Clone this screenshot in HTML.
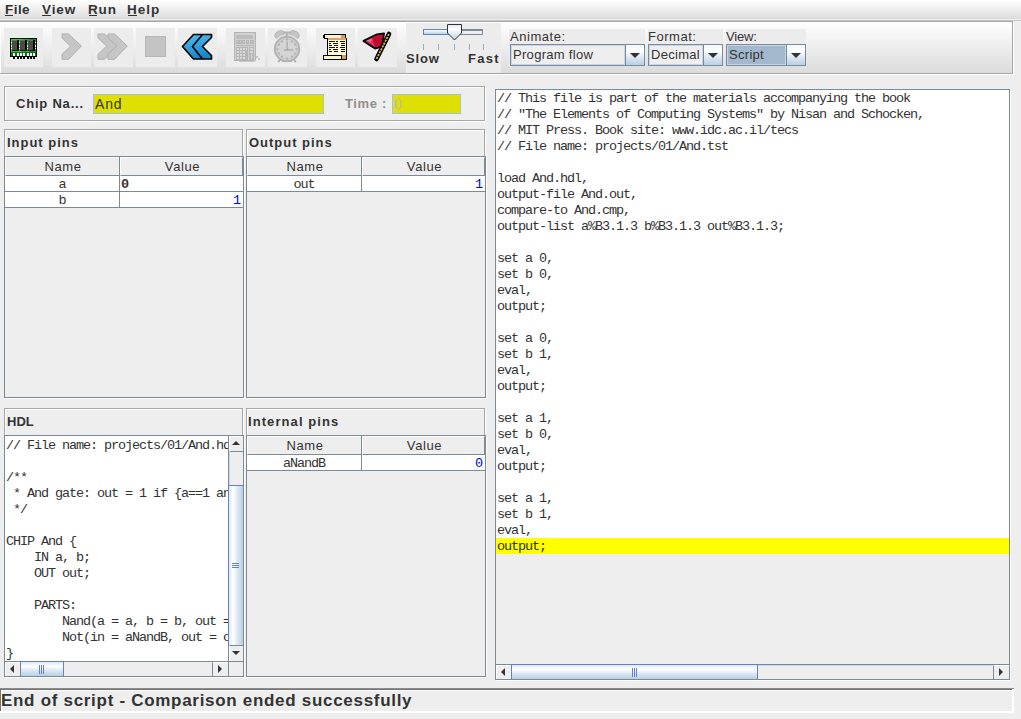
<!DOCTYPE html>
<html><head><meta charset="utf-8">
<style>
*{margin:0;padding:0;box-sizing:border-box}
html,body{width:1021px;height:719px;overflow:hidden;background:#eeeeee;font-family:"Liberation Sans",sans-serif;color:#333333;position:relative}
.a{position:absolute}
.t{position:absolute;white-space:pre;line-height:1}
.b{font-weight:bold}
.m{position:absolute;white-space:pre;font-family:"Liberation Mono",monospace;font-size:13.5px;letter-spacing:-1.1px;line-height:16px;height:16px;color:#333}
.etch{position:absolute;border-top:1px solid #a6a6a6;border-left:1px solid #a6a6a6;border-right:1px solid #fff;border-bottom:1px solid #fff;box-shadow:inset 1px 1px 0 #fff, inset -1px -1px 0 #a6a6a6}
.btn{position:absolute;top:28px;width:39px;height:39px;background:#ececec}
.thumbh{position:absolute;border:1px solid #6382bf;background:linear-gradient(#dde8f3 0%,#ffffff 30%,#dde8f3 60%,#b8cfe5 100%)}
.thumbv{position:absolute;border:1px solid #6382bf;background:linear-gradient(90deg,#dde8f3 0%,#ffffff 30%,#dde8f3 60%,#b8cfe5 100%)}
.sbtn{position:absolute;background:#eeeeee;border-top:1px solid #fff;border-left:1px solid #fff}
svg{position:absolute;overflow:visible}
</style></head><body>
<div class="a" style="left:0;top:0;width:1021px;height:19px;background:linear-gradient(#ffffff,#dcdcdc)"></div>
<div class="a" style="left:0;top:19px;width:1021px;height:1px;background:#eeeeee"></div>
<div class="a" style="left:0;top:20px;width:1021px;height:1px;background:#c6c6c6"></div>
<div class="t b" style="left:5px;top:3px;font-size:13.5px;letter-spacing:0.45px">File</div>
<div class="t b" style="left:42px;top:3px;font-size:13.5px;letter-spacing:0.9px">View</div>
<div class="t b" style="left:88px;top:3px;font-size:13.5px;letter-spacing:0.85px">Run</div>
<div class="t b" style="left:127px;top:3px;font-size:13.5px;letter-spacing:1.0px">Help</div>
<div class="a" style="left:5px;top:15px;width:8px;height:1px;background:#333"></div>
<div class="a" style="left:42px;top:15px;width:9px;height:1px;background:#333"></div>
<div class="a" style="left:89px;top:15px;width:8px;height:1px;background:#333"></div>
<div class="a" style="left:128px;top:15px;width:9px;height:1px;background:#333"></div>
<div class="a" style="left:0;top:21px;width:1014px;height:54px;background:linear-gradient(#ffffff,#dadada)"></div>
<div class="a" style="left:0;top:21px;width:1013px;height:1px;background:#a6a6a6"></div>
<div class="a" style="left:1012px;top:21px;width:1px;height:53px;background:#a6a6a6"></div>
<div class="a" style="left:0;top:73px;width:1013px;height:1px;background:#a6a6a6"></div>
<div class="a" style="left:0;top:22px;width:1012px;height:1px;background:#fff"></div>
<div class="a" style="left:0;top:22px;width:1px;height:51px;background:#fff"></div>
<div class="a" style="left:1013px;top:22px;width:1px;height:53px;background:#fff"></div>
<div class="a" style="left:0;top:74px;width:1014px;height:1px;background:#fff"></div>
<div class="btn" style="left:4px"></div>
<div class="btn" style="left:52px"></div>
<div class="btn" style="left:94px"></div>
<div class="btn" style="left:136px"></div>
<div class="btn" style="left:178px"></div>
<div class="btn" style="left:226px"></div>
<div class="btn" style="left:268px"></div>
<div class="btn" style="left:316px"></div>
<div class="btn" style="left:358px"></div>
<svg style="left:10px;top:37px" width="28" height="22" viewBox="0 0 28 22" shape-rendering="crispEdges">
<rect x="0" y="1" width="27" height="19" fill="#000"/>
<rect x="1" y="2" width="25" height="16" fill="#12b81e"/>
<rect x="1" y="2" width="12" height="16" fill="#22d82a"/>
<rect x="19" y="2" width="7" height="16" fill="#0f8f2a"/>
<rect x="2" y="3" width="7" height="11" fill="#000"/><rect x="2" y="3" width="5" height="10" fill="#4a4a4a"/><rect x="2" y="3" width="5" height="1" fill="#6a6a6a"/>
<rect x="10" y="3" width="7" height="11" fill="#000"/><rect x="10" y="3" width="5" height="10" fill="#4a4a4a"/><rect x="10" y="3" width="5" height="1" fill="#6a6a6a"/>
<rect x="18" y="3" width="7" height="11" fill="#000"/><rect x="18" y="3" width="5" height="10" fill="#4a4a4a"/><rect x="18" y="3" width="5" height="1" fill="#6a6a6a"/>
<g fill="#fff"><rect x="1" y="5" width="1" height="1"/><rect x="1" y="8" width="1" height="2"/><rect x="1" y="11" width="1" height="1"/>
<rect x="9" y="5" width="1" height="1"/><rect x="9" y="8" width="1" height="2"/><rect x="9" y="11" width="1" height="1"/>
<rect x="17" y="5" width="1" height="1"/><rect x="17" y="8" width="1" height="2"/><rect x="17" y="11" width="1" height="1"/>
<rect x="25" y="5" width="1" height="1"/><rect x="25" y="8" width="1" height="2"/><rect x="25" y="11" width="1" height="1"/></g>
<rect x="1" y="15" width="25" height="4" fill="#0a6e1e"/>
<g fill="#ffffff"><rect x="3" y="16" width="2" height="3"/><rect x="7" y="16" width="2" height="3"/><rect x="10" y="16" width="2" height="3"/><rect x="13" y="16" width="2" height="3"/><rect x="17" y="16" width="2" height="3"/><rect x="20" y="16" width="2" height="3"/><rect x="23" y="16" width="2" height="3"/></g>
<g fill="#000"><rect x="2" y="19" width="24" height="1"/><rect x="3" y="20" width="2" height="2"/><rect x="7" y="20" width="2" height="2"/><rect x="10" y="20" width="2" height="2"/><rect x="13" y="20" width="2" height="2"/><rect x="17" y="20" width="2" height="2"/><rect x="20" y="20" width="2" height="2"/><rect x="23" y="20" width="2" height="2"/></g>
</svg>
<svg style="left:62px;top:34px" width="20" height="26"><polygon points="0,0 6.6,0 19.3,12 6.6,25.3 0,25.3 0,20.3 8.7,12 0,4" fill="#c6c6c6" stroke="#b0b0b0" stroke-width="1" stroke-linejoin="miter"/></svg>
<svg style="left:98px;top:34px" width="31" height="26"><polygon points="0,0 6.6,0 19.3,12 6.6,25.3 0,25.3 0,20.3 8.7,12 0,4" fill="#c6c6c6" stroke="#b0b0b0" stroke-width="1" stroke-linejoin="miter"/><polygon points="0,0 6.6,0 19.3,12 6.6,25.3 0,25.3 0,20.3 8.7,12 0,4" transform="translate(10,0)" fill="#c6c6c6" stroke="#b0b0b0" stroke-width="1" stroke-linejoin="miter"/></svg>
<div class="a" style="left:145px;top:36px;width:21px;height:21px;background:#c4c4c4;border:1px solid #b6b6b6"></div>
<svg style="left:182px;top:34px" width="31" height="26" viewBox="0 0 31 26">
<defs><linearGradient id="rg" x1="0" y1="0" x2="0.3" y2="1"><stop offset="0" stop-color="#4fc0f2"/><stop offset="1" stop-color="#1b88c6"/></linearGradient></defs>
<polygon points="0.5,12.5 11.5,0.5 29.5,0.5 29.5,3.5 20.5,12.5 29.5,21.5 29.5,25 11.5,25" fill="url(#rg)" stroke="#000" stroke-width="1.6" stroke-linejoin="miter"/>
<polyline points="20.5,0.5 10.5,12.5 20.5,25" fill="none" stroke="#000" stroke-width="1.6"/>
</svg>
<svg style="left:234px;top:32px" width="28" height="30" viewBox="0 0 28 30" shape-rendering="crispEdges">
<rect x="0" y="0" width="22" height="29" rx="1" fill="#b4b4b4"/>
<rect x="1" y="1" width="20" height="27" fill="#d0d0d0"/>
<rect x="2" y="3" width="17" height="4" fill="#bdbdbd"/>
<g fill="#b6b6b6"><rect x="2" y="8" width="9" height="4"/><rect x="12" y="8" width="3" height="4"/><rect x="16" y="8" width="4" height="4"/>
<rect x="2" y="13" width="18" height="1"/>
<rect x="2" y="15" width="12" height="13"/><rect x="15" y="15" width="5" height="13"/></g>
<g fill="#d8d8d8"><rect x="3" y="16" width="2" height="2"/><rect x="6" y="16" width="2" height="2"/><rect x="9" y="16" width="2" height="2"/><rect x="12" y="16" width="1" height="2"/>
<rect x="3" y="19" width="2" height="2"/><rect x="6" y="19" width="2" height="2"/><rect x="9" y="19" width="2" height="2"/>
<rect x="3" y="22" width="2" height="2"/><rect x="6" y="22" width="2" height="2"/><rect x="9" y="22" width="2" height="2"/>
<rect x="3" y="25" width="2" height="2"/><rect x="6" y="25" width="2" height="2"/><rect x="9" y="25" width="2" height="2"/>
<rect x="16" y="16" width="3" height="2"/><rect x="16" y="19" width="3" height="2"/><rect x="17" y="22" width="1" height="5"/>
<rect x="3" y="9" width="1" height="1"/><rect x="6" y="9" width="1" height="1"/><rect x="9" y="9" width="1" height="1"/><rect x="13" y="9" width="1" height="1"/><rect x="17" y="9" width="1" height="1"/></g>
<g fill="#c8c8c8"><rect x="22" y="24" width="2" height="2"/><rect x="24" y="26" width="2" height="2"/><rect x="20" y="28" width="2" height="1"/><rect x="5" y="29" width="16" height="1"/></g>
</svg>
<svg style="left:272px;top:30px" width="30" height="34" viewBox="0 0 30 34">
<ellipse cx="7.5" cy="4.6" rx="5" ry="3.4" transform="rotate(-30 7.5 4.6)" fill="#c4c4c4" stroke="#b0b0b0" stroke-width="1"/>
<ellipse cx="22.5" cy="4.6" rx="5" ry="3.4" transform="rotate(30 22.5 4.6)" fill="#c4c4c4" stroke="#b0b0b0" stroke-width="1"/>
<circle cx="15" cy="19" r="13.6" fill="none" stroke="#ececec" stroke-width="1.4"/>
<rect x="13.5" y="2" width="3" height="5" fill="#b4b4b4"/><rect x="11" y="1.5" width="8" height="2" fill="#b4b4b4"/>
<line x1="6" y1="32" x2="10" y2="28" stroke="#b4b4b4" stroke-width="2.2"/><line x1="24" y1="32" x2="20" y2="28" stroke="#b4b4b4" stroke-width="2.2"/>
<rect x="10" y="30" width="10" height="2" fill="#b4b4b4"/>
<circle cx="15" cy="19" r="12.2" fill="#d4d4d4" stroke="#b2b2b2" stroke-width="2"/>
<circle cx="15" cy="19" r="10.2" fill="none" stroke="#c6c6c6" stroke-width="1"/>
<g fill="#b4b4b4"><rect x="14" y="8.5" width="2" height="2"/><rect x="14" y="27.5" width="2" height="2"/><rect x="4.5" y="18" width="2" height="2"/><rect x="23.5" y="18" width="2" height="2"/>
<rect x="9" y="10.5" width="2" height="2"/><rect x="19" y="10.5" width="2" height="2"/><rect x="9" y="25.5" width="2" height="2"/><rect x="19" y="25.5" width="2" height="2"/>
<rect x="6" y="13.5" width="2" height="2"/><rect x="22" y="13.5" width="2" height="2"/><rect x="6" y="22.5" width="2" height="2"/><rect x="22" y="22.5" width="2" height="2"/></g>
<rect x="14.5" y="11.5" width="1.3" height="9.5" fill="#aaaaaa"/><rect x="12" y="19.3" width="9" height="1.3" fill="#aaaaaa"/>
</svg>
<svg style="left:323px;top:33px" width="25" height="28" viewBox="0 0 25 28" shape-rendering="crispEdges">
<rect x="1" y="1" width="22" height="5" fill="#000"/>
<rect x="0" y="2" width="2" height="3" fill="#000"/>
<rect x="2" y="2" width="16" height="3" fill="#fff6cc"/>
<rect x="18" y="2" width="4" height="4" fill="#d99a5e"/>
<rect x="4" y="5" width="20" height="18" fill="#000"/>
<rect x="5" y="5" width="18" height="18" fill="#fff8d2"/>
<rect x="5" y="5" width="18" height="2" fill="#dca26a"/>
<g fill="#111"><rect x="6" y="8" width="6" height="1"/><rect x="13" y="8" width="2" height="1"/><rect x="17" y="8" width="5" height="1"/>
<rect x="6" y="10" width="2" height="1"/><rect x="10" y="10" width="5" height="1"/><rect x="18" y="10" width="4" height="1"/>
<rect x="6" y="12" width="3" height="1"/><rect x="11" y="12" width="4" height="1"/><rect x="18" y="12" width="4" height="1"/>
<rect x="6" y="14" width="6" height="1"/><rect x="13" y="14" width="2" height="1"/><rect x="17" y="14" width="5" height="1"/>
<rect x="6" y="16" width="2" height="1"/><rect x="10" y="16" width="5" height="1"/><rect x="18" y="16" width="4" height="1"/>
<rect x="6" y="18" width="3" height="1"/><rect x="11" y="18" width="4" height="1"/><rect x="18" y="18" width="4" height="1"/></g>
<rect x="0" y="22" width="24" height="5" fill="#000"/>
<rect x="1" y="23" width="17" height="3" fill="#fff6cc"/>
<rect x="19" y="22" width="4" height="4" fill="#d99a5e"/>
</svg>
<svg style="left:362px;top:32px" width="31" height="30" viewBox="0 0 31 30">
<polygon points="1.5,9 15,2.5 22,1.5 19.5,14.5 13,16.5" fill="#e8285a" stroke="#000" stroke-width="2" stroke-linejoin="round"/>
<polygon points="10,5 16,3 21,2.5 19,14 13,15" fill="#b8102e"/>
<polygon points="4,9 10,6 9,10" fill="#ff6a8a"/>
<line x1="27" y1="2" x2="14.5" y2="27" stroke="#000" stroke-width="4.6" stroke-linecap="round"/>
<line x1="27" y1="2" x2="14.5" y2="27" stroke="#dcb848" stroke-width="1.8" stroke-dasharray="2.2 1"/>
</svg>
<div class="a" style="left:406px;top:23px;width:95px;height:50px;background:#ececec"></div>
<div class="a" style="left:423px;top:29px;width:26px;height:6px;border:1px solid #6382bf;background:linear-gradient(#ffffff,#b8cfe5)"></div>
<div class="a" style="left:448px;top:29px;width:35px;height:6px;border:1px solid #7a8a99;border-top-width:2px;background:#eeeeee"></div>
<svg style="left:447px;top:24px" width="16" height="17" viewBox="0 0 16 17">
<defs><linearGradient id="tg" x1="0" y1="0" x2="0" y2="1"><stop offset="0" stop-color="#dde8f3"/><stop offset="0.3" stop-color="#ffffff"/><stop offset="1" stop-color="#b8cfe5"/></linearGradient></defs>
<polygon points="0.5,0.5 14.5,0.5 14.5,9 7.5,16 0.5,9" fill="url(#tg)" stroke="#333" stroke-width="1"/>
</svg>
<div class="a" style="left:423px;top:44px;width:1px;height:6px;background:#97abc9"></div>
<div class="a" style="left:438px;top:44px;width:1px;height:6px;background:#97abc9"></div>
<div class="a" style="left:454px;top:44px;width:1px;height:6px;background:#97abc9"></div>
<div class="a" style="left:469px;top:44px;width:1px;height:6px;background:#97abc9"></div>
<div class="a" style="left:483px;top:44px;width:1px;height:6px;background:#97abc9"></div>
<div class="t b" style="left:406px;top:52px;font-size:13px;letter-spacing:0.87px">Slow</div>
<div class="t b" style="left:468px;top:52px;font-size:13px;letter-spacing:1.3px">Fast</div>
<div class="a" style="left:509px;top:29px;width:136px;height:37px;background:#ececec"></div>
<div class="a" style="left:648px;top:29px;width:75px;height:37px;background:#ececec"></div>
<div class="a" style="left:726px;top:29px;width:80px;height:37px;background:#ececec"></div>
<div class="t" style="left:510px;top:30px;font-size:13px;letter-spacing:0.53px">Animate:</div>
<div class="t" style="left:648px;top:30px;font-size:13px;letter-spacing:0.53px">Format:</div>
<div class="t" style="left:726px;top:30px;font-size:13px;letter-spacing:-0.15px">View:</div>
<div class="a" style="left:510px;top:44px;width:135px;height:22px;border:1px solid #7a8a99;background:#eeeeee"></div>
<div class="a" style="left:511px;top:45px;width:114px;height:20px;border:1px solid #c6d6e8;background:#eeeeee"></div>
<div class="a" style="left:625px;top:45px;width:1px;height:20px;background:#7a8a99"></div>
<div class="a" style="left:626px;top:45px;width:18px;height:20px;background:linear-gradient(#f4f8fc 0%,#ffffff 30%,#dde8f3 60%,#b8cfe5 100%)"></div>
<svg style="left:630px;top:53px" width="10" height="5"><polygon points="0,0 10,0 5,5" fill="#333"/></svg>
<div class="t" style="left:513px;top:48px;font-size:13px;letter-spacing:0.3px">Program flow</div>
<div class="a" style="left:648px;top:44px;width:75px;height:22px;border:1px solid #7a8a99;background:#eeeeee"></div>
<div class="a" style="left:649px;top:45px;width:54px;height:20px;border:1px solid #c6d6e8;background:#eeeeee"></div>
<div class="a" style="left:703px;top:45px;width:1px;height:20px;background:#7a8a99"></div>
<div class="a" style="left:704px;top:45px;width:18px;height:20px;background:linear-gradient(#f4f8fc 0%,#ffffff 30%,#dde8f3 60%,#b8cfe5 100%)"></div>
<svg style="left:708px;top:53px" width="10" height="5"><polygon points="0,0 10,0 5,5" fill="#333"/></svg>
<div class="t" style="left:651px;top:48px;font-size:13px;letter-spacing:0.3px">Decimal</div>
<div class="a" style="left:726px;top:44px;width:80px;height:22px;border:1px solid #7a8a99;background:#eeeeee"></div>
<div class="a" style="left:727px;top:45px;width:59px;height:20px;border:1px solid #c6d6e8;background:#a3b8cc"></div>
<div class="a" style="left:786px;top:45px;width:1px;height:20px;background:#7a8a99"></div>
<div class="a" style="left:787px;top:45px;width:18px;height:20px;background:linear-gradient(#f4f8fc 0%,#ffffff 30%,#dde8f3 60%,#b8cfe5 100%)"></div>
<svg style="left:791px;top:53px" width="10" height="5"><polygon points="0,0 10,0 5,5" fill="#333"/></svg>
<div class="t" style="left:729px;top:48px;font-size:13px;letter-spacing:0.3px">Script</div>
<div class="a" style="left:5px;top:87px;width:481px;height:35px;border:1px solid #ffffff"></div>
<div class="a" style="left:4px;top:86px;width:481px;height:35px;border:1px solid #a6a6a6"></div>
<div class="t b" style="left:16px;top:97px;font-size:13px;letter-spacing:0.79px">Chip Na...</div>
<div class="a" style="left:93px;top:94px;width:231px;height:20px;background:#e0e000;border:1px solid #a3c0e0"></div>
<div class="t" style="left:95px;top:97px;font-size:14px;letter-spacing:0.8px">And</div>
<div class="t b" style="left:345px;top:97px;font-size:13px;color:#8e8e8e;letter-spacing:0.64px">Time :</div>
<div class="a" style="left:392px;top:94px;width:69px;height:20px;background:#e0e000;border:1px solid #a3c0e0"></div>
<div class="t" style="left:394px;top:97px;font-size:14px;color:#b8b8b8">0</div>
<div class="a" style="left:5px;top:130px;width:239px;height:269px;border:1px solid #ffffff"></div>
<div class="a" style="left:4px;top:129px;width:239px;height:269px;border:1px solid #a6a6a6"></div>
<div class="a" style="left:247px;top:130px;width:239px;height:269px;border:1px solid #ffffff"></div>
<div class="a" style="left:246px;top:129px;width:239px;height:269px;border:1px solid #a6a6a6"></div>
<div class="a" style="left:5px;top:409px;width:239px;height:269px;border:1px solid #ffffff"></div>
<div class="a" style="left:4px;top:408px;width:239px;height:269px;border:1px solid #a6a6a6"></div>
<div class="a" style="left:247px;top:409px;width:239px;height:269px;border:1px solid #ffffff"></div>
<div class="a" style="left:246px;top:408px;width:239px;height:269px;border:1px solid #a6a6a6"></div>
<div class="t b" style="left:7px;top:136px;font-size:13px;letter-spacing:0.98px">Input pins</div>
<div class="t b" style="left:249px;top:136px;font-size:13px;letter-spacing:0.98px">Output pins</div>
<div class="t b" style="left:7px;top:415px;font-size:13px">HDL</div>
<div class="t b" style="left:248px;top:415px;font-size:13px;letter-spacing:1.08px">Internal pins</div>
<div class="a" style="left:4px;top:156px;width:240px;height:242px;border:1px solid #7a8a99;background:#eeeeee"></div>
<div class="a" style="left:244px;top:157px;width:1px;height:242px;background:#fff"></div><div class="a" style="left:5px;top:398px;width:240px;height:1px;background:#fff"></div>
<div class="a" style="left:5px;top:157px;width:114px;height:19px;border-bottom:1px solid #7a8a99;border-top:1px solid #fff;border-left:1px solid #fff"></div>
<div class="a" style="left:119px;top:157px;width:1px;height:19px;background:#7a8a99"></div>
<div class="a" style="left:120px;top:157px;width:123px;height:19px;border-bottom:1px solid #7a8a99;border-top:1px solid #fff;border-left:1px solid #fff;border-right:1px solid #7a8a99"></div>
<div class="t" style="left:6px;top:160px;width:114px;text-align:center;font-size:13px;letter-spacing:0.6px">Name</div>
<div class="t" style="left:121px;top:160px;width:123px;text-align:center;font-size:13px;letter-spacing:0.6px">Value</div>
<div class="a" style="left:5px;top:176px;width:238px;height:16px;background:#fff;border-bottom:1px solid #7a8a99"></div>
<div class="a" style="left:119px;top:176px;width:1px;height:16px;background:#7a8a99"></div>
<div class="m" style="left:5px;top:177px;width:114px;text-align:center;">a</div>
<div class="m" style="left:121px;top:177px;font-weight:bold;font-size:13.5px;letter-spacing:0">0</div>
<div class="a" style="left:5px;top:192px;width:238px;height:16px;background:#fff;border-bottom:1px solid #7a8a99"></div>
<div class="a" style="left:119px;top:192px;width:1px;height:16px;background:#7a8a99"></div>
<div class="m" style="left:5px;top:193px;width:114px;text-align:center;">b</div>
<div class="m" style="left:120px;top:193px;width:123px;text-align:right;color:#0000ff;padding-right:3px">1</div>
<div class="a" style="left:246px;top:156px;width:240px;height:242px;border:1px solid #7a8a99;background:#eeeeee"></div>
<div class="a" style="left:486px;top:157px;width:1px;height:242px;background:#fff"></div><div class="a" style="left:247px;top:398px;width:240px;height:1px;background:#fff"></div>
<div class="a" style="left:247px;top:157px;width:114px;height:19px;border-bottom:1px solid #7a8a99;border-top:1px solid #fff;border-left:1px solid #fff"></div>
<div class="a" style="left:361px;top:157px;width:1px;height:19px;background:#7a8a99"></div>
<div class="a" style="left:362px;top:157px;width:123px;height:19px;border-bottom:1px solid #7a8a99;border-top:1px solid #fff;border-left:1px solid #fff;border-right:1px solid #7a8a99"></div>
<div class="t" style="left:248px;top:160px;width:114px;text-align:center;font-size:13px;letter-spacing:0.6px">Name</div>
<div class="t" style="left:363px;top:160px;width:123px;text-align:center;font-size:13px;letter-spacing:0.6px">Value</div>
<div class="a" style="left:247px;top:176px;width:238px;height:16px;background:#fff;border-bottom:1px solid #7a8a99"></div>
<div class="a" style="left:361px;top:176px;width:1px;height:16px;background:#7a8a99"></div>
<div class="m" style="left:247px;top:177px;width:114px;text-align:center;">out</div>
<div class="m" style="left:362px;top:177px;width:123px;text-align:right;color:#0000ff;padding-right:3px">1</div>
<div class="a" style="left:246px;top:435px;width:240px;height:242px;border:1px solid #7a8a99;background:#eeeeee"></div>
<div class="a" style="left:486px;top:436px;width:1px;height:242px;background:#fff"></div><div class="a" style="left:247px;top:677px;width:240px;height:1px;background:#fff"></div>
<div class="a" style="left:247px;top:436px;width:114px;height:19px;border-bottom:1px solid #7a8a99;border-top:1px solid #fff;border-left:1px solid #fff"></div>
<div class="a" style="left:361px;top:436px;width:1px;height:19px;background:#7a8a99"></div>
<div class="a" style="left:362px;top:436px;width:123px;height:19px;border-bottom:1px solid #7a8a99;border-top:1px solid #fff;border-left:1px solid #fff;border-right:1px solid #7a8a99"></div>
<div class="t" style="left:248px;top:439px;width:114px;text-align:center;font-size:13px;letter-spacing:0.6px">Name</div>
<div class="t" style="left:363px;top:439px;width:123px;text-align:center;font-size:13px;letter-spacing:0.6px">Value</div>
<div class="a" style="left:247px;top:455px;width:238px;height:16px;background:#fff;border-bottom:1px solid #7a8a99"></div>
<div class="a" style="left:361px;top:455px;width:1px;height:16px;background:#7a8a99"></div>
<div class="m" style="left:247px;top:456px;width:114px;text-align:center;">aNandB</div>
<div class="m" style="left:362px;top:456px;width:123px;text-align:right;color:#0000ff;padding-right:3px">0</div>
<div class="a" style="left:4px;top:435px;width:240px;height:242px;border:1px solid #7a8a99;background:#eeeeee"></div>
<div class="a" style="left:244px;top:436px;width:1px;height:242px;background:#fff"></div><div class="a" style="left:5px;top:677px;width:240px;height:1px;background:#fff"></div>
<div class="a" style="left:5px;top:436px;width:223px;height:225px;background:#fff;overflow:hidden">
<div class="m" style="left:1px;top:2px">// File name: projects/01/And.hdl</div>
<div class="m" style="left:1px;top:18px"></div>
<div class="m" style="left:1px;top:34px">/**</div>
<div class="m" style="left:1px;top:50px"> * And gate: out = 1 if {a==1 and b==1}, 0 otherwise</div>
<div class="m" style="left:1px;top:66px"> */</div>
<div class="m" style="left:1px;top:82px"></div>
<div class="m" style="left:1px;top:98px">CHIP And {</div>
<div class="m" style="left:1px;top:114px">    IN a, b;</div>
<div class="m" style="left:1px;top:130px">    OUT out;</div>
<div class="m" style="left:1px;top:146px"></div>
<div class="m" style="left:1px;top:162px">    PARTS:</div>
<div class="m" style="left:1px;top:178px">        Nand(a = a, b = b, out = aNandB);</div>
<div class="m" style="left:1px;top:194px">        Not(in = aNandB, out = out);</div>
<div class="m" style="left:1px;top:210px">}</div>
</div>
<div class="a" style="left:228px;top:436px;width:1px;height:225px;background:#7a8a99"></div>
<div class="a" style="left:229px;top:436px;width:14px;height:225px;background:#eeeeee"></div>
<div class="sbtn" style="left:229px;top:436px;width:14px;height:16px;border-bottom:1px solid #7a8a99"></div>
<svg style="left:232px;top:441px" width="8" height="4"><polygon points="0,4 8,4 4,0" fill="#333"/></svg>
<div class="a" style="left:229px;top:452px;width:1px;height:33px;background:#c8d8ea"></div>
<div class="thumbv" style="left:228px;top:485px;width:15px;height:161px;border-right:none"></div>
<div class="a" style="left:232px;top:563px;width:7px;height:1px;background:#6382bf"></div>
<div class="a" style="left:232px;top:565px;width:7px;height:1px;background:#6382bf"></div>
<div class="a" style="left:232px;top:567px;width:7px;height:1px;background:#6382bf"></div>
<div class="sbtn" style="left:229px;top:645px;width:14px;height:16px;border-top:1px solid #7a8a99"></div>
<svg style="left:232px;top:651px" width="8" height="4"><polygon points="0,0 8,0 4,4" fill="#333"/></svg>
<div class="a" style="left:5px;top:661px;width:223px;height:1px;background:#7a8a99"></div>
<div class="a" style="left:5px;top:662px;width:223px;height:14px;background:#eeeeee"></div>
<div class="sbtn" style="left:5px;top:662px;width:15px;height:14px"></div>
<svg style="left:10px;top:665px" width="4" height="8"><polygon points="4,0 4,8 0,4" fill="#333"/></svg>
<div class="thumbh" style="left:20px;top:661px;width:44px;height:15px;border-bottom:none"></div>
<div class="a" style="left:39px;top:665px;width:1px;height:9px;background:#6382bf"></div>
<div class="a" style="left:41px;top:665px;width:1px;height:9px;background:#6382bf"></div>
<div class="a" style="left:43px;top:665px;width:1px;height:9px;background:#6382bf"></div>
<div class="sbtn" style="left:212px;top:662px;width:16px;height:14px;border-left:1px solid #7a8a99"></div>
<svg style="left:218px;top:665px" width="4" height="8"><polygon points="0,0 0,8 4,4" fill="#333"/></svg>
<div class="a" style="left:228px;top:661px;width:15px;height:15px;background:#eeeeee;border-left:1px solid #7a8a99;border-top:1px solid #7a8a99"></div>
<div class="a" style="left:495px;top:89px;width:515px;height:591px;border:1px solid #7a8a99;background:#eeeeee"></div>
<div class="a" style="left:1010px;top:90px;width:1px;height:591px;background:#fff"></div><div class="a" style="left:496px;top:680px;width:515px;height:1px;background:#fff"></div>
<div class="a" style="left:496px;top:90px;width:513px;height:464px;background:#fff"></div>
<div class="a" style="left:496px;top:538px;width:513px;height:16px;background:#ffff00"></div>
<div class="m" style="left:497px;top:91px">// This file is part of the materials accompanying the book</div>
<div class="m" style="left:497px;top:107px">// &quot;The Elements of Computing Systems&quot; by Nisan and Schocken,</div>
<div class="m" style="left:497px;top:123px">// MIT Press. Book site: www.idc.ac.il/tecs</div>
<div class="m" style="left:497px;top:139px">// File name: projects/01/And.tst</div>
<div class="m" style="left:497px;top:155px"></div>
<div class="m" style="left:497px;top:171px">load And.hdl,</div>
<div class="m" style="left:497px;top:187px">output-file And.out,</div>
<div class="m" style="left:497px;top:203px">compare-to And.cmp,</div>
<div class="m" style="left:497px;top:219px">output-list a%B3.1.3 b%B3.1.3 out%B3.1.3;</div>
<div class="m" style="left:497px;top:235px"></div>
<div class="m" style="left:497px;top:251px">set a 0,</div>
<div class="m" style="left:497px;top:267px">set b 0,</div>
<div class="m" style="left:497px;top:283px">eval,</div>
<div class="m" style="left:497px;top:299px">output;</div>
<div class="m" style="left:497px;top:315px"></div>
<div class="m" style="left:497px;top:331px">set a 0,</div>
<div class="m" style="left:497px;top:347px">set b 1,</div>
<div class="m" style="left:497px;top:363px">eval,</div>
<div class="m" style="left:497px;top:379px">output;</div>
<div class="m" style="left:497px;top:395px"></div>
<div class="m" style="left:497px;top:411px">set a 1,</div>
<div class="m" style="left:497px;top:427px">set b 0,</div>
<div class="m" style="left:497px;top:443px">eval,</div>
<div class="m" style="left:497px;top:459px">output;</div>
<div class="m" style="left:497px;top:475px"></div>
<div class="m" style="left:497px;top:491px">set a 1,</div>
<div class="m" style="left:497px;top:507px">set b 1,</div>
<div class="m" style="left:497px;top:523px">eval,</div>
<div class="m" style="left:497px;top:539px">output;</div>
<div class="a" style="left:496px;top:664px;width:513px;height:1px;background:#7a8a99"></div>
<div class="a" style="left:496px;top:665px;width:513px;height:14px;background:#eeeeee;border-top:1px solid #c8d8ea"></div>
<div class="sbtn" style="left:496px;top:665px;width:15px;height:14px"></div>
<svg style="left:501px;top:668px" width="4" height="8"><polygon points="4,0 4,8 0,4" fill="#333"/></svg>
<div class="thumbh" style="left:511px;top:664px;width:247px;height:15px;border-bottom:none"></div>
<div class="a" style="left:632px;top:668px;width:1px;height:9px;background:#6382bf"></div>
<div class="a" style="left:634px;top:668px;width:1px;height:9px;background:#6382bf"></div>
<div class="a" style="left:636px;top:668px;width:1px;height:9px;background:#6382bf"></div>
<div class="sbtn" style="left:993px;top:665px;width:16px;height:14px;border-left:1px solid #7a8a99"></div>
<svg style="left:999px;top:668px" width="4" height="8"><polygon points="0,0 0,8 4,4" fill="#333"/></svg>
<div class="a" style="left:0;top:688px;width:1014px;height:1px;background:#8c8c8c"></div>
<div class="a" style="left:0;top:689px;width:1013px;height:1px;background:#747474"></div>
<div class="a" style="left:0;top:689px;width:1px;height:23px;background:#747474"></div>
<div class="a" style="left:1px;top:690px;width:1011px;height:1px;background:#ffffff"></div>
<div class="a" style="left:1px;top:690px;width:1px;height:21px;background:#ffffff"></div>
<div class="a" style="left:0;top:711px;width:1014px;height:2px;background:#ffffff"></div>
<div class="a" style="left:1012px;top:689px;width:2px;height:24px;background:#ffffff"></div>
<div class="t b" style="left:1px;top:692px;font-size:17px;letter-spacing:0.7px">End of script - Comparison ended successfully</div>
</body></html>
